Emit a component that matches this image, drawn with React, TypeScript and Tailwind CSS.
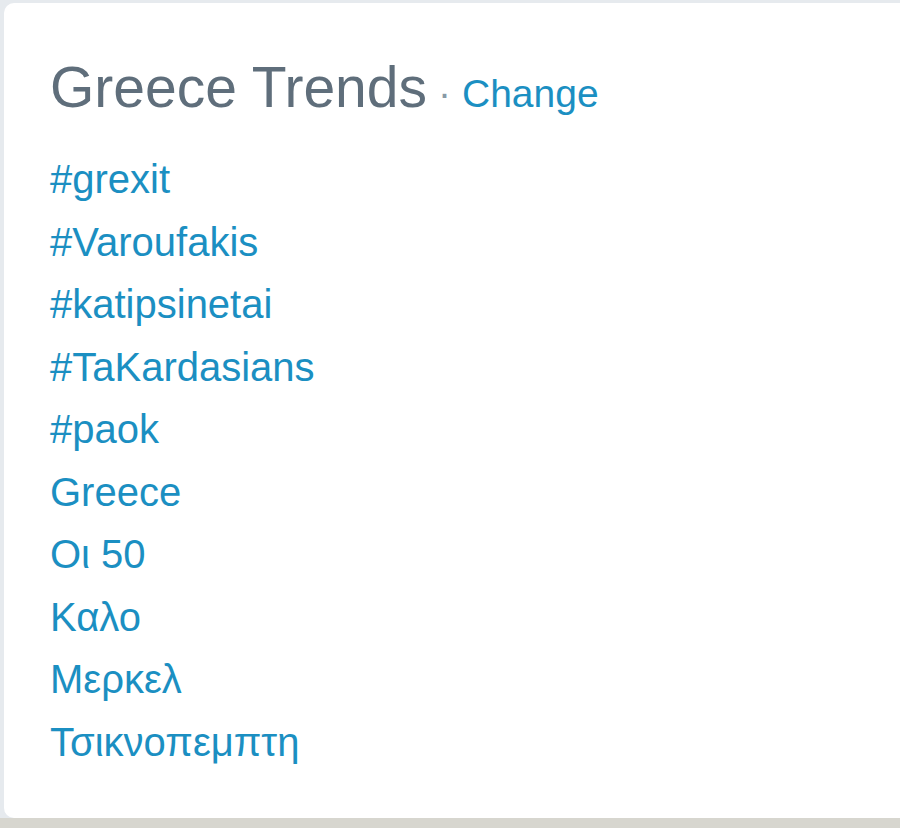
const trends = [
  '#grexit',
  '#Varoufakis',
  '#katipsinetai',
  '#TaKardasians',
  '#paok',
  'Greece',
  'Οι 50',
  'Καλο',
  'Μερκελ',
  'Τσικνοπεμπτη',
];

export default function App() {
  return (
    <div className="w-[900px] h-[828px] flex flex-col overflow-hidden font-['Liberation_Sans',Arial,sans-serif]">
      <div className="flex-1 flex flex-col bg-[#e6eaee] pt-[3px] pl-[4px]">
        <div className="flex-1 bg-white rounded-l-[10px] pl-[46px] pt-[52px]">
          <h3 className="text-[57px] leading-[64px] text-[#5f6e7b] whitespace-nowrap">
            Greece Trends
            <small className="text-[39px] text-[#8899a6] ml-[11px]">
              ·
              <a href="#" className="text-[#1b8fc2] ml-[11px]">Change</a>
            </small>
          </h3>
          <ul className="mt-[22px] flex flex-col">
            {trends.map((t) => (
              <li key={t} className="text-[40px] leading-[62.5px]">
                <a href="#" className="text-[#1b8fc2]">{t}</a>
              </li>
            ))}
          </ul>
        </div>
      </div>
      <div className="h-[10px] bg-[#d7d6cf]" />
    </div>
  );
}
